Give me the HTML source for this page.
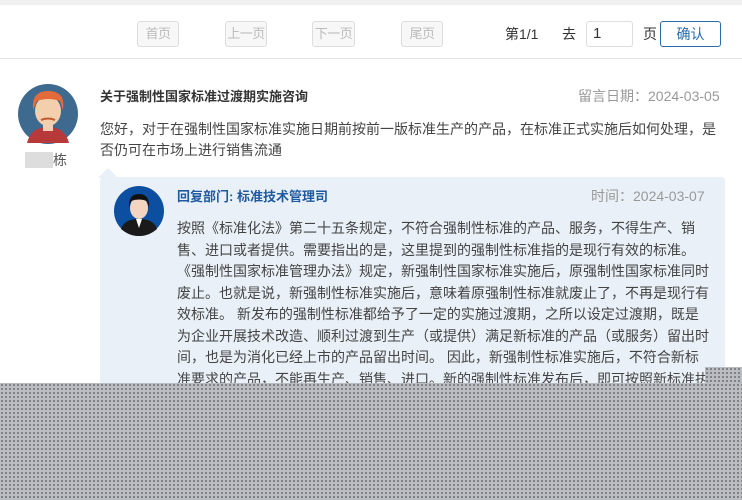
<!DOCTYPE html>
<html><head><meta charset="utf-8"><style>
body{margin:0;width:742px;height:500px;overflow:hidden;background:#fff;font-family:"Liberation Sans","Noto Sans CJK SC",sans-serif;position:relative;color:#333}
.top{position:absolute;left:0;top:0;width:742px;height:5px;background:#f0f0f0}
.btn{position:absolute;top:21px;height:24px;border:1px solid #ddd;border-radius:3px;background:#f7f7f7;color:#bbb;font-size:13px;line-height:24px;text-align:center;width:40px;white-space:nowrap;letter-spacing:-0.5px}
.t{position:absolute;font-size:14px;white-space:nowrap}
.sep{position:absolute;left:0;top:58px;width:742px;height:1px;background:#e2e2e2}
.reply{position:absolute;left:100px;top:177px;width:625px;height:230px;background:#e9f0f7;border-radius:4px}
.arrow{position:absolute;left:98px;top:168px;width:0;height:0;border-left:10px solid transparent;border-right:10px solid transparent;border-bottom:10px solid #e9f0f7}
.body{position:absolute;left:177px;top:218px;font-size:14px;line-height:21.5px;color:#444;white-space:nowrap}
.ov{position:absolute;background-color:#b9bdc1;background-image:radial-gradient(circle,#333 0.6px,transparent 0.9px);background-size:4px 4px}
</style></head><body>
<div class="top"></div>
<div class="btn" style="left:137px">首页</div>
<div class="btn" style="left:225px">上一页</div>
<div class="btn" style="left:312px;width:41px">下一页</div>
<div class="btn" style="left:401px">尾页</div>
<div class="t" style="left:505px;top:24px">第1/1</div>
<div class="t" style="left:562px;top:24px">去</div>
<div style="position:absolute;left:586px;top:21px;width:47px;height:26px;border:1px solid #ddd;border-radius:3px;font-size:15px;line-height:24px;padding-left:6px;box-sizing:border-box">1</div>
<div class="t" style="left:643px;top:24px">页</div>
<div style="position:absolute;left:660px;top:21px;width:59px;height:24px;border:1px solid #2a6ba8;border-radius:3px;color:#2a6ba8;font-size:14px;line-height:24px;text-align:center">确认</div>
<div class="sep"></div>
<svg style="position:absolute;left:17px;top:83px" width="62" height="62" viewBox="0 0 62 62">
<ellipse cx="31" cy="31" rx="30" ry="30" fill="#3e6a8f"/>
<path d="M10 60 Q14 44 31 44 Q48 44 52 60Z" fill="#b8393a"/>
<rect x="26" y="38" width="10" height="10" fill="#f0d0b5"/>
<ellipse cx="31" cy="28" rx="13" ry="15" fill="#f3cfae"/>
<path d="M16 27 Q14 8 31 8 Q49 8 46 27 L43 18 Q31 14 20 18Z" fill="#e56a3a"/>
<path d="M24 37 Q31 34 38 37" stroke="#c0592e" stroke-width="2" fill="none"/>
</svg>
<div class="t" style="left:25px;top:150px;color:#555"><span style="background:#ddd;color:transparent">张张</span>栋</div>
<div class="t" style="left:100px;top:86px;font-weight:bold;font-size:13px;color:#333">关于强制性国家标准过渡期实施咨询</div>
<div class="t" style="left:578px;top:86px;color:#999">留言日期：2024-03-05</div>
<div class="t" style="left:100px;top:119px;line-height:21px;color:#444;white-space:normal;width:625px">您好，对于在强制性国家标准实施日期前按前一版标准生产的产品，在标准正式实施后如何处理，是否仍可在市场上进行销售流通</div>
<div class="arrow"></div>
<div class="reply"></div>
<svg style="position:absolute;left:114px;top:186px" width="50" height="50" viewBox="0 0 50 50">
<circle cx="25" cy="25" r="25" fill="#0c4ea0"/>
<path d="M7 43 Q10 33 25 33 Q40 33 43 43 Q35 50 25 50 Q15 50 7 43Z" fill="#1a1a1a"/>
<path d="M22 33 L25 42 L28 33Z" fill="#fff"/>
<ellipse cx="25" cy="22" rx="9" ry="11" fill="#f4d6c0"/>
<path d="M15 22 Q14 8 25 8 Q36 8 35 22 L33 15 Q25 12 17 15Z" fill="#111"/>
</svg>
<div class="t" style="left:177px;top:186px;font-weight:bold;color:#1f5aa0;font-size:13px">回复部门: 标准技术管理司</div>
<div class="t" style="left:591px;top:186px;color:#999">时间：2024-03-07</div>
<div class="body">按照《标准化法》第二十五条规定，不符合强制性标准的产品、服务，不得生产、销<br>售、进口或者提供。需要指出的是，这里提到的强制性标准指的是现行有效的标准。<br>《强制性国家标准管理办法》规定，新强制性国家标准实施后，原强制性国家标准同时<br>废止。也就是说，新强制性标准实施后，意味着原强制性标准就废止了，不再是现行有<br>效标准。 新发布的强制性标准都给予了一定的实施过渡期，之所以设定过渡期，既是<br>为企业开展技术改造、顺利过渡到生产（或提供）满足新标准的产品（或服务）留出时<br>间，也是为消化已经上市的产品留出时间。 因此，新强制性标准实施后，不符合新标<br>准要求的产品，不能再生产、销售、进口。新的强制性标准发布后，即可按照新标准执</div>
<div class="ov" style="left:0;top:383px;width:742px;height:117px"></div>
<div class="ov" style="left:705px;top:367px;width:37px;height:16px"></div>
</body></html>
